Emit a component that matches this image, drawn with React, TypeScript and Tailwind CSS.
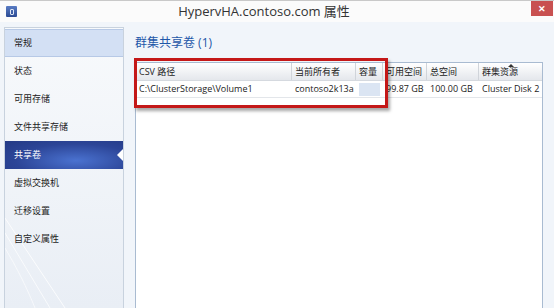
import React from 'react';

const navItems = ['常规', '状态', '可用存储', '文件共享存储', '共享卷', '虚拟交换机', '迁移设置', '自定义属性'];

const columns = [
  { label: 'CSV 路径', w: 'w-[156px]' },
  { label: '当前所有者', w: 'w-[64px]' },
  { label: '容量', w: 'w-[27px]' },
  { label: '可用空间', w: 'w-[44px]' },
  { label: '总空间', w: 'w-[52px]' },
  { label: '群集资源', w: 'flex-1' },
];

const font = { fontFamily: '"Open Sans", "Noto Sans CJK SC", sans-serif' };

const App: React.FC = () => {
  return (
    <div className="w-[554px] h-[308px] overflow-hidden flex flex-col bg-[#f1f5fa] text-[#222]" style={font}>
      {/* title bar */}
      <div className="relative h-[22px] shrink-0 bg-[#fbfbfb] border-t border-[#c9c9c9] flex items-center justify-center pr-[26px]">
        <div className="absolute left-[6px] top-[5px] w-[11px] h-[11px] rounded-[1px] bg-gradient-to-b from-[#5a7cc4] to-[#2b4a93] flex items-center justify-center">
          <div className="w-[4px] h-[6px] border border-[#dfe7f5] rounded-[1px]" />
        </div>
        <span className="text-[13px] text-[#333] leading-none">HypervHA.contoso.com 属性</span>
        <div className="absolute right-[1px] top-0 w-[22px] h-[15px] bg-[#c85050] flex items-center justify-center text-white text-[9px] font-bold leading-none">
          ✕
        </div>
      </div>

      <div className="flex flex-1 min-h-0 pt-[5px]">
        {/* sidebar */}
        <div className="relative ml-[4px] w-[120px] shrink-0 border border-b-0 border-[#c8d2de] bg-gradient-to-b from-[#f8fafc] to-[#e9eef5] pt-[1px] overflow-hidden">
          <svg className="absolute left-0 bottom-0" width="120" height="110" viewBox="0 0 120 110" fill="none">
            <path d="M0 20 C 20 50, 40 80, 60 110" stroke="#ffffff" strokeWidth="1" opacity="0.8" />
            <path d="M0 35 C 15 60, 30 85, 45 110" stroke="#ffffff" strokeWidth="1" opacity="0.7" />
            <path d="M0 50 C 12 70, 22 90, 30 110" stroke="#ffffff" strokeWidth="1" opacity="0.6" />
          </svg>
          <div className="relative flex flex-col">
            {navItems.map((item, i) => {
              const first = i === 0;
              const selected = item === '共享卷';
              return (
                <div
                  key={item}
                  className={
                    'relative h-[28px] flex items-center pl-[9px] text-[9px] ' +
                    (selected
                      ? 'text-white bg-[radial-gradient(ellipse_at_60%_70%,#4a72d0_0%,#2c4597_60%,#243a85_100%)]'
                      : first
                        ? 'bg-[#d3e0f4] border-y border-[#b7c9e6]'
                        : '')
                  }
                >
                  {item}
                  {selected && (
                    <div className="absolute right-0 top-[8px] w-0 h-0 border-y-[6px] border-y-transparent border-r-[6px] border-r-white" />
                  )}
                </div>
              );
            })}
          </div>
        </div>

        {/* main */}
        <div className="flex-1 min-w-0 flex flex-col pl-[11px] pr-[11px]">
          <div className="h-[30px] shrink-0 flex items-center text-[12px] text-[#1e57a8] pt-[2px]">群集共享卷 (1)</div>
          <div className="relative flex-1 mt-[5px] bg-white border-x border-t border-[#a9bbd1] text-[9px]">
            {/* header */}
            <div className="relative flex h-[18px] bg-gradient-to-b from-[#ffffff] to-[#e4e7ec] border-b border-[#d5d9df]">
              {columns.map((c, i) => (
                <div
                  key={c.label}
                  className={c.w + ' shrink-0 flex items-center pl-[3px] whitespace-nowrap overflow-hidden ' + (i < columns.length - 1 ? 'border-r border-[#d0d4da]' : '')}
                >
                  {c.label}
                </div>
              ))}
              <div className="absolute right-[28px] top-[1px] w-0 h-0 border-x-[3px] border-x-transparent border-b-[3px] border-b-[#333]" />
            </div>
            {/* row */}
            <div className="flex h-[17px] border-b border-[#e3e6ea]">
              <div className="w-[156px] shrink-0 flex items-center pl-[3px] whitespace-nowrap">C:\ClusterStorage\Volume1</div>
              <div className="w-[64px] shrink-0 flex items-center pl-[3px] whitespace-nowrap overflow-hidden">contoso2k13a</div>
              <div className="w-[27px] shrink-0 flex items-center pl-[3px] pr-[3px]">
                <div className="w-full h-[13px] bg-[#dbe5f3]" />
              </div>
              <div className="w-[44px] shrink-0 flex items-center pl-[3px] whitespace-nowrap overflow-hidden">99.87 GB</div>
              <div className="w-[52px] shrink-0 flex items-center pl-[3px] whitespace-nowrap">100.00 GB</div>
              <div className="flex-1 flex items-center pl-[3px] whitespace-nowrap overflow-hidden">Cluster Disk 2</div>
            </div>

            {/* annotation box */}
            <div className="absolute left-[-2px] top-[-5px] w-[254px] h-[50px] border-[3px] border-[#c41818] shadow-[2px_3px_3px_rgba(0,0,0,0.35)]" />
          </div>
        </div>
      </div>
    </div>
  );
};

export default App;
